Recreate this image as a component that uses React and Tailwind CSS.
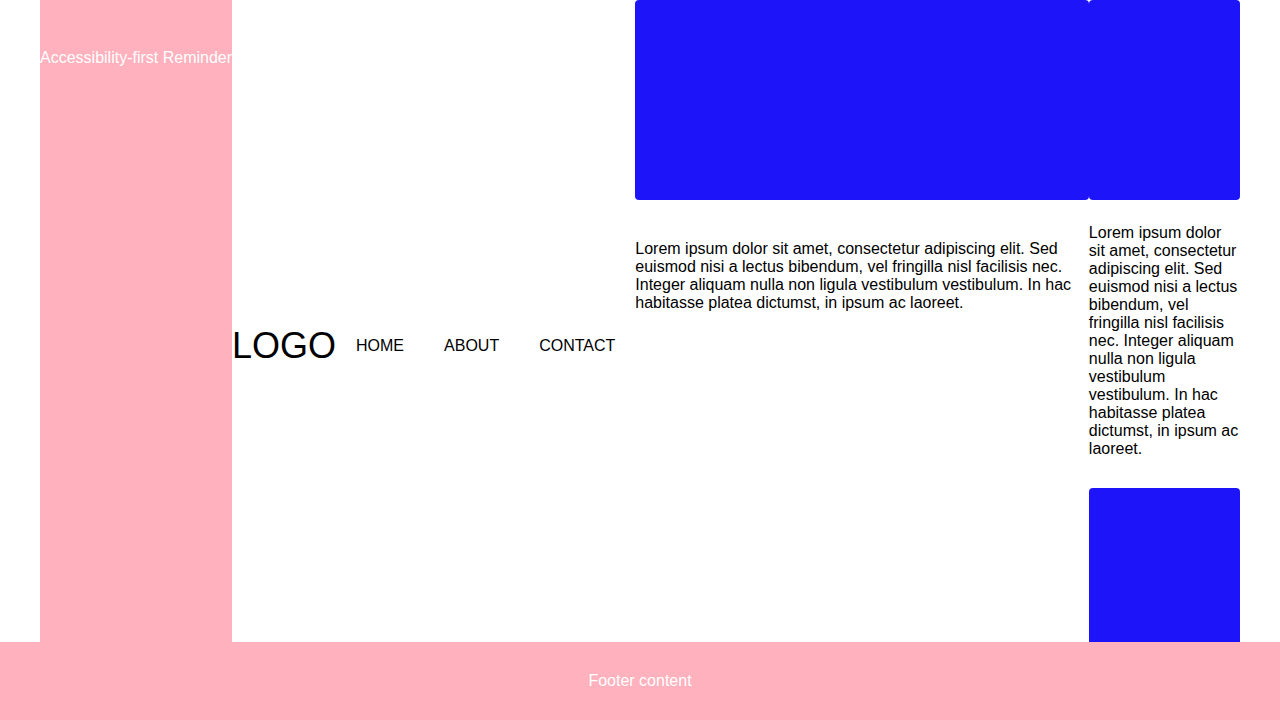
const lorem =
    "Lorem ipsum dolor sit amet, consectetur adipiscing elit. Sed euismod nisi a lectus bibendum, vel fringilla nisl facilisis nec. Integer aliquam nulla non ligula vestibulum vestibulum. In hac habitasse platea dictumst, in ipsum ac laoreet.";

function App() {
    return (
        <div className="bg-white text-black font-['Liberation_Sans',Arial,sans-serif]">
            <div className="flex items-center px-10">
                {/* Sidebar */}
                <aside className="self-stretch w-48 shrink-0 bg-[#ffb1bd] pt-[49px]">
                    <p className="text-white text-base leading-[18px] whitespace-nowrap">
                        Accessibility-first Reminder
                    </p>
                </aside>

                {/* Header */}
                <header className="flex items-center shrink-0">
                    <div className="text-[36px] leading-[40px]">LOGO</div>
                    <nav>
                        <ul className="flex">
                            <li className="px-5 text-base">HOME</li>
                            <li className="px-5 text-base">ABOUT</li>
                            <li className="px-5 text-base">CONTACT</li>
                        </ul>
                    </nav>
                </header>

                {/* Main */}
                <main className="flex-[3] self-start min-w-0">
                    <div className="h-[200px] rounded bg-[#1e14fa]"></div>
                    <p className="mt-10 text-base leading-[18px]">{lorem}</p>
                </main>

                {/* Aside */}
                <section className="flex-[1] self-start min-w-0 pb-1">
                    <div className="h-[200px] rounded bg-[#1e14fa]"></div>
                    <p className="mt-6 text-base leading-[18px]">{lorem}</p>
                    <div className="mt-[30px] h-[200px] rounded bg-[#1e14fa]"></div>
                </section>
            </div>

            {/* Footer */}
            <footer className="fixed bottom-0 left-0 right-0 h-[78px] bg-[#ffb1bd] flex items-center justify-center">
                <p className="text-white text-base">Footer content</p>
            </footer>
        </div>
    );
}

export default App;
